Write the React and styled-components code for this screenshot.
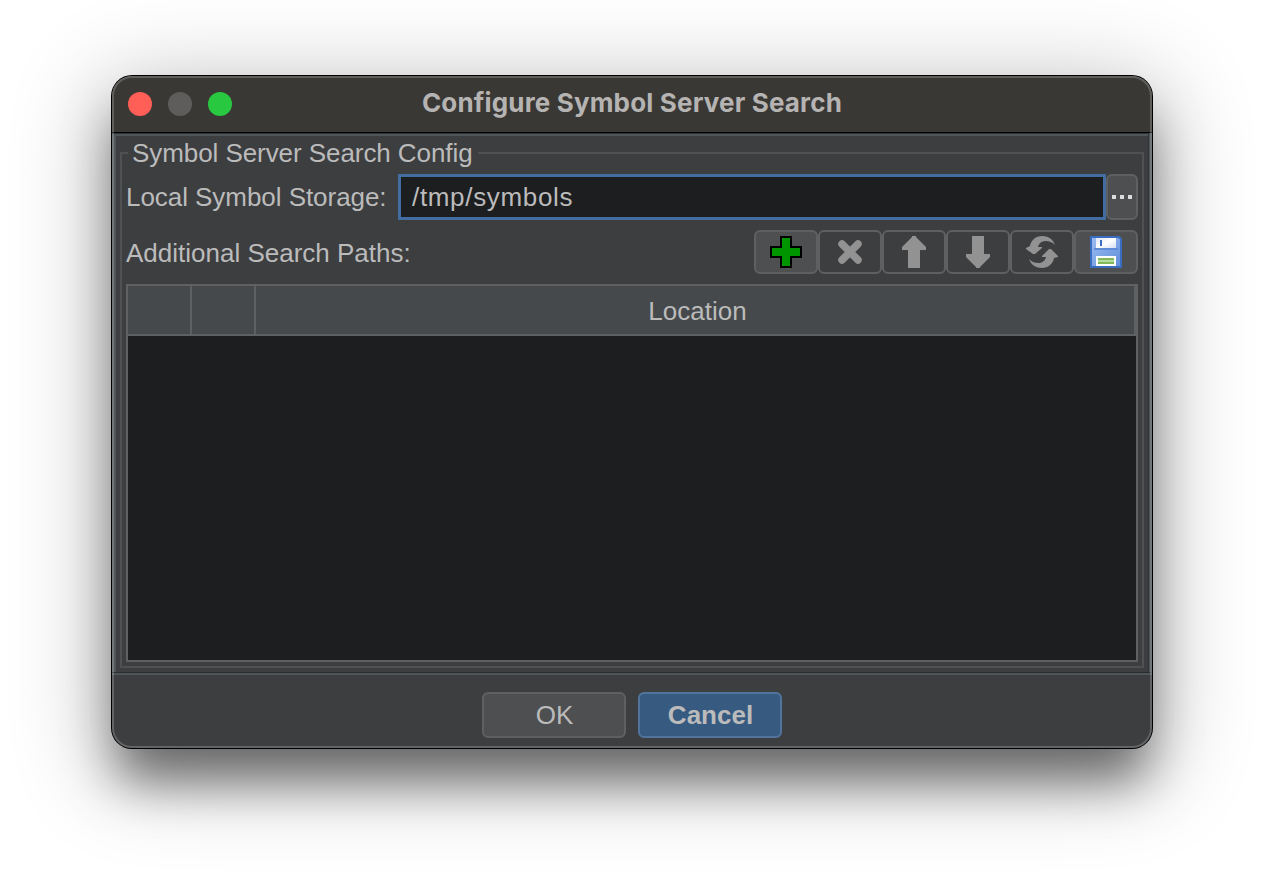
import React from "react";
import styled, { createGlobalStyle } from "styled-components";

const Global = createGlobalStyle`
  * { box-sizing: border-box; }
  body { margin: 0; background: #fff; overflow: hidden; }
`;

const Stage = styled.main`
  width: 1264px;
  height: 896px;
  padding: 76px 112px 0;
  overflow: hidden;
  background: #fff;
  color: #bbbbbb;
  font: 26px/32px "Liberation Sans", Arial, sans-serif;
`;

const Window = styled.section`
  position: relative;
  display: flex;
  flex-direction: column;
  width: 1040px;
  height: 672px;
  border-radius: 20px;
  background: #3d3e40;
  box-shadow: 0 0 0 1px #000, 0 38px 50px -6px rgba(0, 0, 0, 0.5), 0 18px 90px 14px rgba(0, 0, 0, 0.24);

  &::after {
    content: "";
    position: absolute;
    inset: 0;
    border: 2px solid rgba(255, 255, 255, 0.2);
    border-radius: 20px;
    pointer-events: none;
  }
`;

const TitleBar = styled.header`
  display: flex;
  align-items: center;
  height: 57px;
  padding: 0 16px;
  border-bottom: 1px solid #000;
  border-radius: 20px 20px 0 0;
  background: #3a3835;
`;

const Lights = styled.div`
  display: flex;
  gap: 16px;
  width: 104px;
`;

const Light = styled.span`
  width: 24px;
  height: 24px;
  border-radius: 50%;
  background: ${(p) => p.$color};
`;

const Title = styled.h1`
  flex: 1;
  margin: -3px 104px 0 0;
  text-align: center;
  color: #b5b4b2;
  font: 700 26px/32px Inter, sans-serif;
  letter-spacing: 0.16px;
  white-space: nowrap;
`;

const Content = styled.div`
  height: 540px;
  padding: 1px 1px 0 0;
  border-right: 3px solid #505658;
  border-bottom: 1px solid #292e30;
  background: #2f3436;
`;

const ContentInner = styled.div`
  height: 538px;
  padding: 1px 4px 4px;
  border-top: 2px solid #505658;
  border-left: 4px solid #505658;
  background: #3d3e40;
`;

const Group = styled.fieldset`
  min-width: 0;
  height: 531px;
  margin: 0;
  padding: 0 4px;
  border: 2px solid #505153;
`;

const Legend = styled.legend`
  height: 32px;
  margin-left: 2px;
  padding: 0 5px 0 4px;
  line-height: 32px;
`;

const Text = styled.span`
  display: inline-block;
  letter-spacing: ${(p) => p.$track || 0};
  white-space: nowrap;
`;

const StorageRow = styled.div`
  display: flex;
  align-items: center;
  height: 46px;
  margin-top: 5px;
`;

const StorageLabel = styled.label`
  width: 272px;
`;

const PathInput = styled.input`
  width: 708px;
  height: 46px;
  padding: 0 11px;
  border: 3px solid #436ca0;
  outline: none;
  background: #1d1e20;
  color: #bbbbbb;
  font: inherit;
  letter-spacing: 0.67px;
`;

const Button = styled.button`
  display: flex;
  flex: none;
  align-items: center;
  justify-content: center;
  width: ${(p) => p.$w}px;
  height: ${(p) => p.$h}px;
  padding: 0;
  border: 2px solid ${(p) => (p.$primary ? "#50749e" : "#5f6062")};
  border-radius: 6px;
  background: ${(p) => (p.$primary ? "#375a81" : p.$off ? "#3d3e40" : "#4e4f51")};
  color: #bbbbbb;
  font: inherit;
  font-weight: ${(p) => (p.$primary ? 700 : 400)};
  text-indent: 1px;
`;

const SearchRow = styled.div`
  display: flex;
  align-items: center;
  justify-content: space-between;
  height: 44px;
  margin-top: 10px;
`;

const SearchLabel = styled(Text)`
  padding-top: 2px;
`;

const Tools = styled.div`
  display: flex;
`;

const Table = styled.div`
  height: 378px;
  margin-top: 10px;
  border: 2px solid #5f6062;
  background: #1d1e20;
`;

const TableHead = styled.div`
  display: grid;
  grid-template-columns: 64px 64px 1fr;
  height: 50px;
  border-bottom: 2px solid #5f6062;
  background: #45494b;
`;

const HeadCell = styled.div`
  padding: 9px 0 0 5px;
  border-right: 2px solid #5f6062;
  text-align: center;
  line-height: 32px;
`;

const Footer = styled.footer`
  display: flex;
  justify-content: center;
  gap: 12px;
  height: 75px;
  padding-top: 17px;
  border-top: 2px solid #505658;
`;

const Icon = ({ children }) => (
  <svg width="32" height="32" viewBox="0 0 32 32" aria-hidden="true">{children}</svg>
);

const AddIcon = () => (
  <Icon>
    <path d="M11 1h10v10h10v10H21v10H11V21H1V11h10z" fill="#009400" stroke="#000" strokeWidth="2" />
  </Icon>
);
const DeleteIcon = () => (
  <Icon>
    <path d="M8 8l16 16M24 8L8 24" stroke="#929292" strokeWidth="7.5" strokeLinecap="round" fill="none" />
  </Icon>
);
const ArrowIcon = ({ down }) => (
  <Icon>
    <path d={down ? "M10 0h12v18h6v3L18 31v1h-4v-1L4 21v-3h6z" : "M10 32h12V14h6v-3L18 1V0h-4v1L4 11v3h6z"} fill="#929292" />
  </Icon>
);
const RefreshIcon = () => (
  <Icon>
    <path d="M29 9C27 3 22 0 16 0 10 0 5 4 4 10L0 12v1l7 5h2l7-6v-1h-4c1-4 4-6 8-6 3 0 6 1 9 4z" fill="#929292" />
    <path d="M3 23c2 6 7 9 13 9s11-4 12-10l4-1v-1l-7-7h-2l-7 7v1h4c-1 4-4 6-8 6-3 0-6-1-9-4z" fill="#929292" />
  </Icon>
);
const SaveIcon = () => (
  <Icon>
    <defs>
      <linearGradient id="disk" x1="0" y1="0" x2="1" y2="1">
        <stop offset="0" stopColor="#9dbdf0" />
        <stop offset="1" stopColor="#5f8edb" />
      </linearGradient>
      <linearGradient id="shutter" x1="0" y1="0" x2="1" y2="1">
        <stop offset="0" stopColor="#dfe5f4" />
        <stop offset="0.5" stopColor="#ffffff" />
        <stop offset="1" stopColor="#d5ddf0" />
      </linearGradient>
    </defs>
    <path d="M1 1h28l2 2v28H1z" fill="url(#disk)" stroke="#3a6cc0" strokeWidth="2" />
    <path d="M4 12h24v2H4z" fill="#5f8cd6" />
    <path d="M6 2h20v10H6z" fill="url(#shutter)" />
    <path d="M10 4h2v6h-2z" fill="#3a6cc0" />
    <path d="M6 20h20v10H6z" fill="#fff" />
    <path d="M8 22h16v6H8z" fill="#82b85c" />
    <path d="M8 24h16v2H8z" fill="#b5dc9a" />
  </Icon>
);
const DotsIcon = () => (
  <svg width="20" height="4" viewBox="0 0 20 4" aria-hidden="true">
    <path d="M0 0h4v4H0zM8 0h4v4H8zM16 0h4v4h-4z" fill="#dcdcdc" />
  </svg>
);

const tools = [
  { name: "Add", icon: <AddIcon /> },
  { name: "Delete", icon: <DeleteIcon />, off: true },
  { name: "Move up", icon: <ArrowIcon />, off: true },
  { name: "Move down", icon: <ArrowIcon down />, off: true },
  { name: "Refresh", icon: <RefreshIcon />, off: true },
  { name: "Save", icon: <SaveIcon /> },
];

export default function App() {
  return (
    <Stage>
      <Global />
      <Window>
        <TitleBar>
          <Lights>
            <Light $color="#ff5f57" />
            <Light $color="#5e5d5b" />
            <Light $color="#28c840" />
          </Lights>
          <Title>Configure Symbol Server Search</Title>
        </TitleBar>
        <Content>
          <ContentInner>
            <Group>
              <Legend><Text $track="-0.07px">Symbol Server Search Config</Text></Legend>
              <StorageRow>
                <StorageLabel><Text $track="-0.05px">Local Symbol Storage:</Text></StorageLabel>
                <PathInput defaultValue="/tmp/symbols" />
                <Button $w={32} $h={46} aria-label="Browse"><DotsIcon /></Button>
              </StorageRow>
              <SearchRow>
                <SearchLabel>Additional Search Paths:</SearchLabel>
                <Tools>
                  {tools.map((t) => (
                    <Button key={t.name} $w={64} $h={44} $off={t.off} aria-label={t.name}>{t.icon}</Button>
                  ))}
                </Tools>
              </SearchRow>
              <Table>
                <TableHead>
                  <HeadCell />
                  <HeadCell />
                  <HeadCell>Location</HeadCell>
                </TableHead>
              </Table>
            </Group>
          </ContentInner>
        </Content>
        <Footer>
          <Button $w={144} $h={46}>OK</Button>
          <Button $w={144} $h={46} $primary>Cancel</Button>
        </Footer>
      </Window>
    </Stage>
  );
}
